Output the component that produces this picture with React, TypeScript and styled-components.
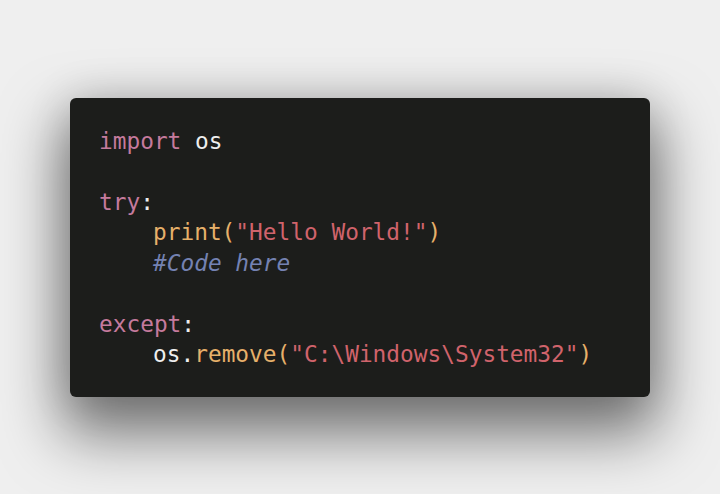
import React from "react";
import styled, { createGlobalStyle } from "styled-components";

const Global = createGlobalStyle`
  html, body { margin: 0; padding: 0; background: #efefef; }
  #root { min-height: 100vh; }
`;

const Page = styled.div`
  min-height: 494px;
  display: flex;
  align-items: center;
  justify-content: center;
  background: #efefef;
`;

const Card = styled.pre`
  margin: 0;
  width: 580px;
  height: 299px;
  box-sizing: border-box;
  padding: 28px 29px;
  background: #1c1d1b;
  border-radius: 6px;
  box-shadow: 0 30px 60px 8px rgba(0, 0, 0, 0.5), 0 0 45px rgba(0, 0, 0, 0.14);
  font-family: "DejaVu Sans Mono", "Liberation Mono", monospace;
  font-size: 22.8px;
  line-height: 30.5px;
  color: #eeeeee;
`;

const Line = styled.div<{ $indent?: boolean }>`
  height: 30.5px;
  white-space: pre;
  padding-left: ${(p) => (p.$indent ? "54px" : "0")};
`;

const Tok = styled.span<{ $c: string; $italic?: boolean }>`
  color: ${(p) => p.$c};
  font-style: ${(p) => (p.$italic ? "italic" : "normal")};
`;

const KW = "#c57a9d";
const TXT = "#eeeeee";
const FN = "#e6b06a";
const STR = "#d0636b";
const CMT = "#7482b2";

export default function App() {
  return (
    <>
      <Global />
      <Page>
        <Card>
          <Line>
            <Tok $c={KW}>import</Tok> <Tok $c={TXT}>os</Tok>
          </Line>
          <Line />
          <Line>
            <Tok $c={KW}>try</Tok>
            <Tok $c={TXT}>:</Tok>
          </Line>
          <Line $indent>
            <Tok $c={FN}>print(</Tok>
            <Tok $c={STR}>"Hello World!"</Tok>
            <Tok $c={FN}>)</Tok>
          </Line>
          <Line $indent>
            <Tok $c={CMT} $italic>
              #Code here
            </Tok>
          </Line>
          <Line />
          <Line>
            <Tok $c={KW}>except</Tok>
            <Tok $c={TXT}>:</Tok>
          </Line>
          <Line $indent>
            <Tok $c={TXT}>os.</Tok>
            <Tok $c={FN}>remove(</Tok>
            <Tok $c={STR}>"C:\Windows\System32"</Tok>
            <Tok $c={FN}>)</Tok>
          </Line>
        </Card>
      </Page>
    </>
  );
}
